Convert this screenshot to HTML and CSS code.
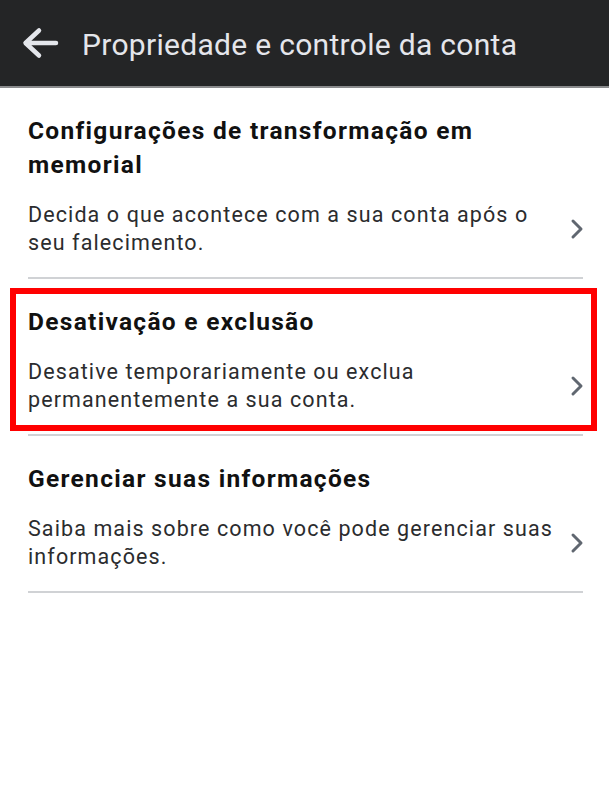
FILE: index.html
```html
<!DOCTYPE html>
<html lang="pt">
<head>
  <meta charset="UTF-8">
  <title>Propriedade e controle da conta</title>
  <meta name="viewport" content="width=device-width, initial-scale=1">
  <link rel="stylesheet" href="styles.css">
</head>
<body>
  <div class="topbar">
    <svg class="back-icon" width="38" height="34" viewBox="0 0 38 34">
      <path d="M35 17H5M18 4.5L4.5 17L18 29.5" fill="none" stroke="#e4e6eb" stroke-width="4.5" stroke-linecap="round" stroke-linejoin="round"/>
    </svg>
    <span class="topbar-title">Propriedade e controle da conta</span>
  </div>

  <div class="settings-list">
    <div class="setting-item">
      <h2 class="setting-title">Configurações de transformação em memorial</h2>
      <div class="setting-row">
        <p class="setting-desc">Decida o que acontece com a sua conta após o seu falecimento.</p>
        <svg class="chevron" width="14" height="22" viewBox="0 0 14 22">
          <path d="M3 3L11 11L3 19" fill="none" stroke="#606770" stroke-width="3" stroke-linecap="round" stroke-linejoin="round"/>
        </svg>
      </div>
    </div>

    <div class="setting-item">
      <h2 class="setting-title">Desativação e exclusão</h2>
      <div class="setting-row">
        <p class="setting-desc">Desative temporariamente ou exclua permanentemente a sua conta.</p>
        <svg class="chevron" width="14" height="22" viewBox="0 0 14 22">
          <path d="M3 3L11 11L3 19" fill="none" stroke="#606770" stroke-width="3" stroke-linecap="round" stroke-linejoin="round"/>
        </svg>
      </div>
      <!-- destaque vermelho por cima do item -->
      <div class="highlight"></div>
    </div>

    <div class="setting-item">
      <h2 class="setting-title">Gerenciar suas informações</h2>
      <div class="setting-row">
        <p class="setting-desc">Saiba mais sobre como você pode gerenciar suas informações.</p>
        <svg class="chevron" width="14" height="22" viewBox="0 0 14 22">
          <path d="M3 3L11 11L3 19" fill="none" stroke="#606770" stroke-width="3" stroke-linecap="round" stroke-linejoin="round"/>
        </svg>
      </div>
    </div>
  </div>
</body>
</html>
```

FILE: styles.css
```css
body {
  margin: 0;
  background: #fff;
  font-family: Roboto, "Liberation Sans", Arial, sans-serif;
  color: #1c1e21;
}
.topbar {
  height: 86px;
  background: #242526;
  border-bottom: 2px solid #8a8b8d;
  display: flex;
  align-items: center;
  padding-left: 21px;
  gap: 23px;
}
.back-icon {
  flex: none;
  margin-top: -1px;
}
.topbar-title {
  color: #e4e6eb;
  font-size: 30px;
  letter-spacing: 0.3px;
  margin-top: 2px;
}

.settings-list {
  padding: 0 26px 0 28px;
}
.setting-item {
  position: relative;
  padding: 26px 0 20px 0;
  border-bottom: 2px solid #d0d2d5;
}
.setting-title {
  margin: 0;
  font-size: 24.5px;
  font-weight: bold;
  line-height: 34px;
  letter-spacing: 1.3px;
  color: #111;
  padding-right: 40px;
}
.setting-row {
  display: flex;
  align-items: center;
  margin-top: 19px;
}
.setting-desc {
  flex: 1;
  margin: 0;
  font-size: 21.5px;
  line-height: 28px;
  letter-spacing: 1.1px;
  color: #2b2c2e;
  padding-right: 6px;
}
.chevron {
  flex: none;
  margin-right: -1px;
}
.highlight {
  position: absolute;
  left: -18px;
  top: 9px;
  width: 575px;
  height: 131px;
  border: 6px solid #ff0000;
  pointer-events: none;
}
```
